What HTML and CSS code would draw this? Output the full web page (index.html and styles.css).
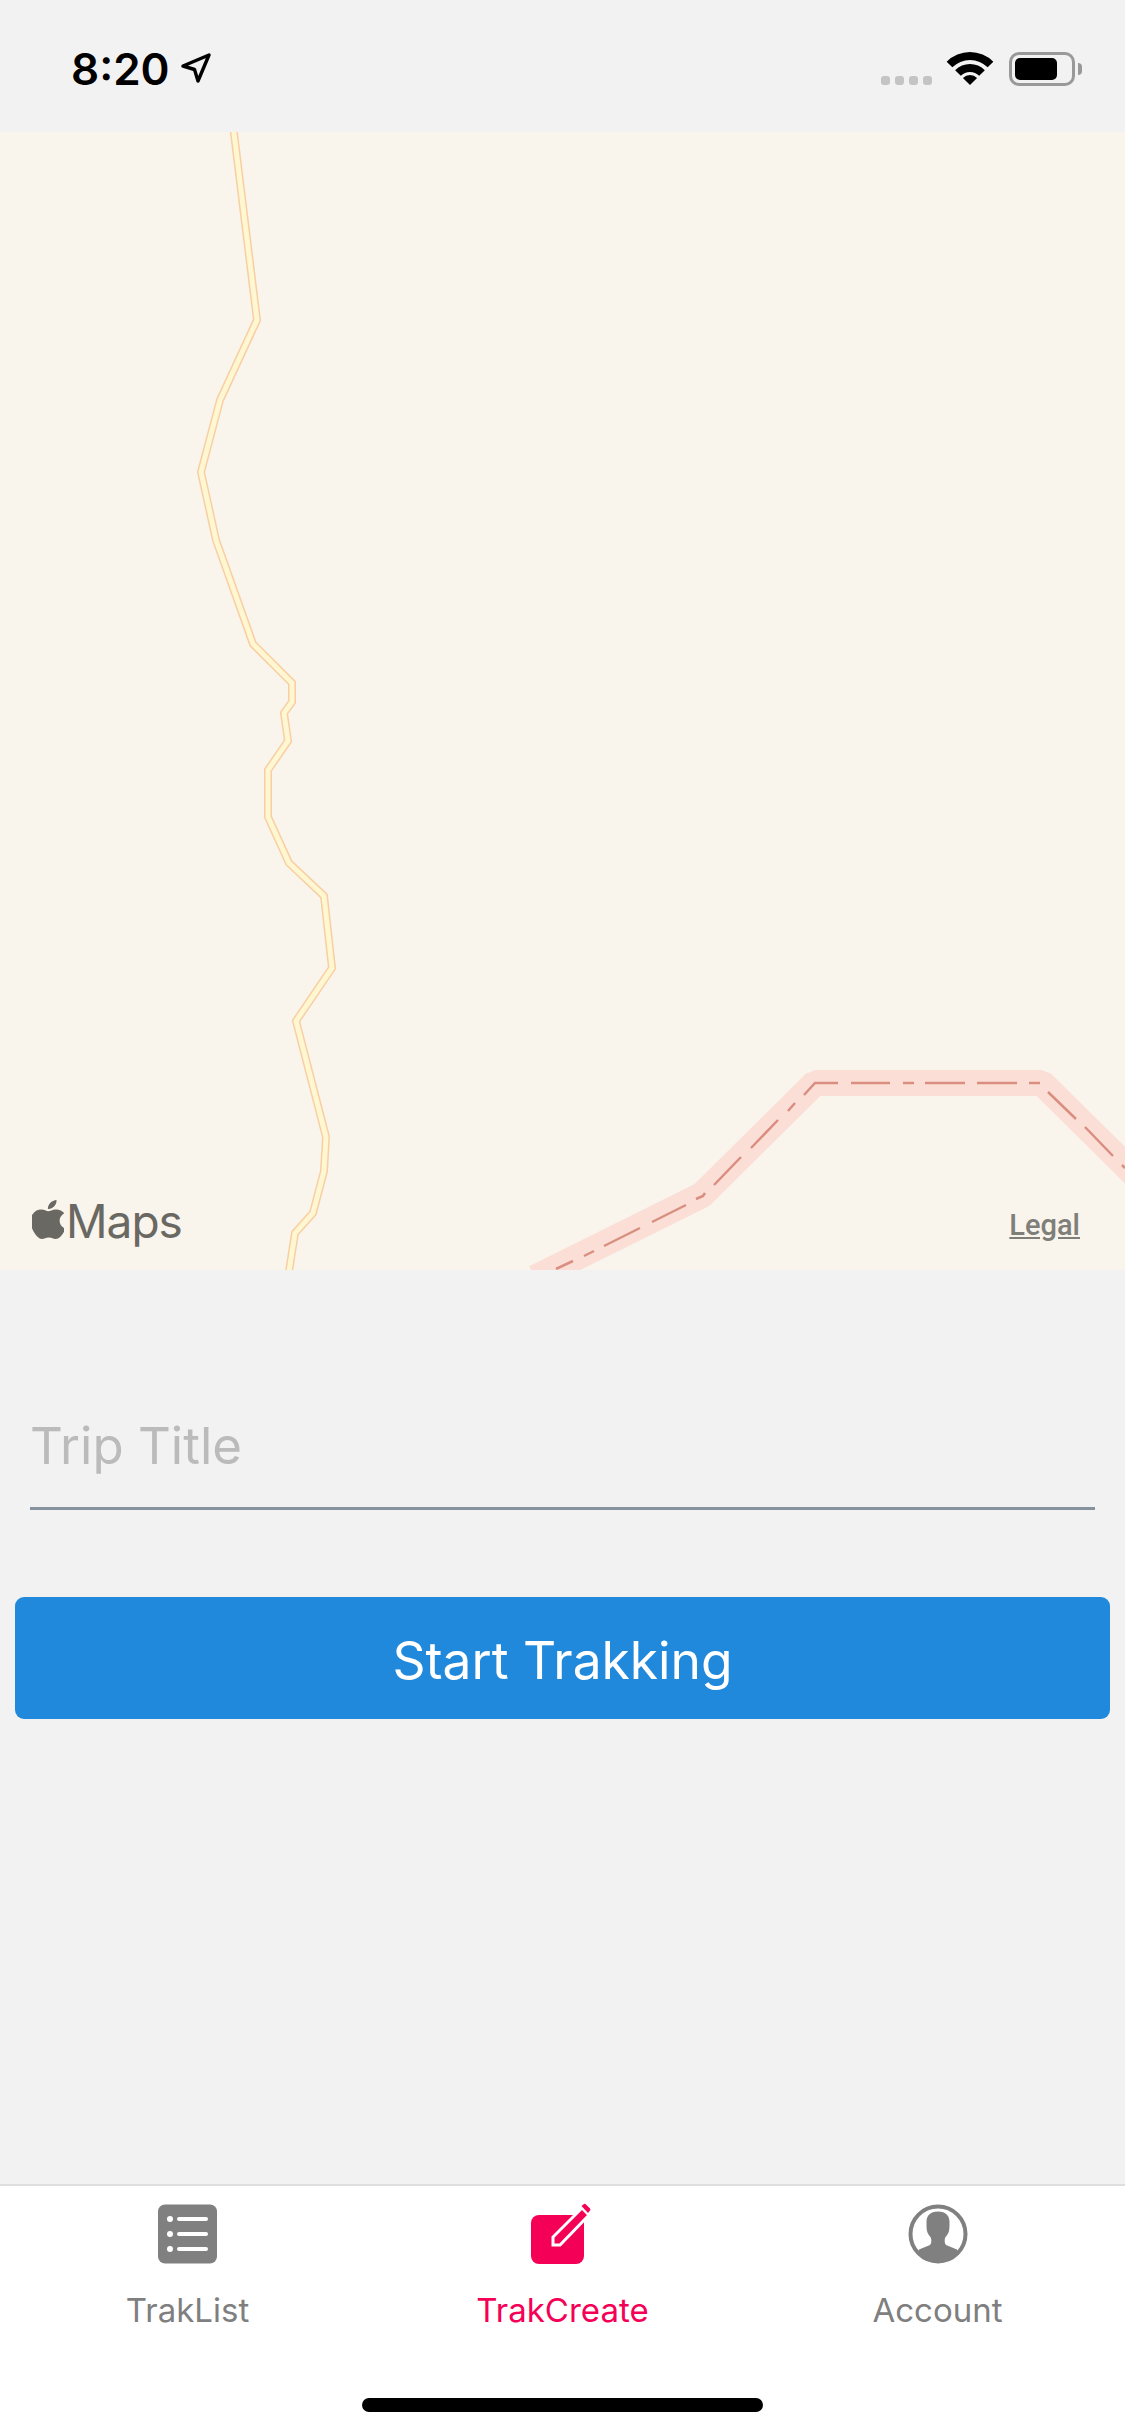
FILE: index.html
```html
<!DOCTYPE html>
<html lang="en">
<head>
    <meta charset="UTF-8">
    <title>TrakCreate</title>
    <link rel="stylesheet" href="styles.css">
</head>
<body>
    <div class="screen">
        <div class="status-bar">
            <div class="status-left">
                <span class="time">8:20</span>
                <svg class="location" width="30" height="30" viewBox="0 0 30 30">
                    <path d="M2 13 L28 2 L17 28 L13.5 16.5 Z" fill="none" stroke="#000" stroke-width="3.4" stroke-linejoin="round"/>
                </svg>
            </div>
            <div class="status-right">
                <div class="signal">
                    <span class="dot"></span>
                    <span class="dot"></span>
                    <span class="dot"></span>
                    <span class="dot"></span>
                </div>
                <svg class="wifi" width="46" height="34" viewBox="0 0 46 34">
                    <path d="M-.33 9.67 A33 33 0 0 1 46.33 9.67 L40.68 15.32 A25 25 0 0 0 5.32 15.32 Z"/>
                    <path d="M8.15 18.15 A21 21 0 0 1 37.85 18.15 L32.19 23.81 A13 13 0 0 0 13.81 23.81 Z"/>
                    <path d="M15.93 25.93 A10 10 0 0 1 30.07 25.93 L23 33 Z"/>
                </svg>
                <div class="battery">
                    <div class="battery-body"><div class="battery-level"></div></div>
                    <div class="battery-nub"></div>
                </div>
            </div>
        </div>

        <div class="map">
            <svg class="map-roads" width="1125" height="1138" viewBox="0 132 1125 1138">
                <path class="road-band" d="M535 1278 L702 1195 L815 1083 L1042 1083 L1140 1180"/>
                <path class="road-dash" d="M556 1269 L573 1261 M584 1256 L594 1251 M604 1246 L640 1228 M652 1222 L686 1205 M696 1199 L703 1196 L705 1193 M714 1185 L741 1157 M751 1148 L778 1120 M788 1111 L795 1103 M804 1095 L815 1083 L838 1083 M851 1083 L890 1083 M903 1083 L914 1083 M925 1083 L965 1083 M977 1083 L1017 1083 M1029 1083 L1040 1083 M1048 1092 L1076 1119 M1085 1127 L1113 1156 M1122 1165 L1125 1168"/>
                <path class="road-edge" d="M233 125 L257 320 L220 400 L201 472 L216 540 L253 644 L292 683 L292 702 L284 713 L288 741 L268 770 L268 817 L289 863 L324 896 L332 968 L296 1021 L326 1137 L324 1171 L313 1213 L295 1233 L288 1278"/>
                <path class="road-fill" d="M233 125 L257 320 L220 400 L201 472 L216 540 L253 644 L292 683 L292 702 L284 713 L288 741 L268 770 L268 817 L289 863 L324 896 L332 968 L296 1021 L326 1137 L324 1171 L313 1213 L295 1233 L288 1278"/>
            </svg>
            <div class="maps-logo">
                <svg class="apple" width="32" height="39" viewBox="3 0 18 24" preserveAspectRatio="none">
                    <path d="M12.152 6.896c-.948 0-2.415-1.078-3.96-1.04-2.04.027-3.91 1.183-4.961 3.014-2.117 3.675-.546 9.103 1.519 12.09 1.013 1.454 2.208 3.09 3.792 3.039 1.52-.065 2.09-.987 3.935-.987 1.831 0 2.35.987 3.96.948 1.637-.026 2.676-1.48 3.676-2.948 1.156-1.688 1.636-3.325 1.662-3.415-.039-.013-3.182-1.221-3.22-4.857-.026-3.04 2.48-4.494 2.597-4.559-1.429-2.09-3.623-2.324-4.39-2.376-2-.156-3.675 1.09-4.61 1.09zM15.53 3.83c.843-1.012 1.4-2.427 1.245-3.83-1.207.052-2.662.805-3.532 1.818-.78.896-1.454 2.338-1.273 3.714 1.338.104 2.715-.688 3.559-1.701"/>
                </svg>
                <span class="maps-text">Maps</span>
            </div>
            <span class="legal">Legal</span>
        </div>

        <div class="form">
            <div class="title-field">
                <span class="placeholder">Trip Title</span>
            </div>
            <button class="start-button" type="button">Start Trakking</button>
        </div>

        <div class="tab-bar">
            <div class="tabs">
                <div class="tab">
                    <svg class="tab-icon" width="60" height="60" viewBox="0 0 60 60">
                        <rect x="0" y="0.5" width="59" height="59" rx="7" fill="#808080"/>
                        <g fill="#fff">
                            <circle cx="12" cy="15" r="3"/>
                            <circle cx="12" cy="30" r="3"/>
                            <circle cx="12" cy="45" r="3"/>
                        </g>
                        <g stroke="#fff" stroke-width="4" stroke-linecap="round">
                            <path d="M21 15 H48"/>
                            <path d="M21 30 H48"/>
                            <path d="M21 45 H48"/>
                        </g>
                    </svg>
                    <span class="tab-label">TrakList</span>
                </div>
                <div class="tab tab-active">
                    <svg class="tab-icon" width="60" height="60" viewBox="2 0 60 60">
                        <rect x="0" y="11" width="53" height="49" rx="8" fill="#f50057"/>
                        <path d="M22 41 L22 33 L51 4 L58 11 L29 41 Z" fill="#f50057" stroke="#fff" stroke-width="3" stroke-linejoin="miter"/>
                        <path d="M50.5 2 L53 0 Q54 -.5 55 .5 L59 4.5 Q60 5.5 59 6.5 L57 9 Z" fill="#f50057"/>
                    </svg>
                    <span class="tab-label">TrakCreate</span>
                </div>
                <div class="tab">
                    <svg class="tab-icon" width="60" height="60" viewBox="0 0 60 60">
                        <defs>
                            <clipPath id="account-clip"><circle cx="30" cy="30" r="27.5"/></clipPath>
                        </defs>
                        <circle cx="30" cy="30" r="27.5" fill="#fff" stroke="#808080" stroke-width="4"/>
                        <path clip-path="url(#account-clip)" d="M30 7.5 C38 7.5 41.5 12 41.5 18 C41.5 22 41.5 25 41 27 C40.5 30 38 32 37 34 C36.5 37 36.5 39 38 41 L49 45.5 L52 62 L8 62 L11 45.5 L22 41 C23.5 39 23.5 37 23 34 C22 32 19.5 30 19 27 C18.5 25 18.5 22 18.5 18 C18.5 12 22 7.5 30 7.5 Z" fill="#808080"/>
                    </svg>
                    <span class="tab-label">Account</span>
                </div>
            </div>
            <div class="home-indicator"></div>
        </div>
    </div>
</body>
</html>
```

FILE: styles.css
```css
* {
    box-sizing: border-box;
}
body {
    margin: 0;
    font-family: Inter, "Liberation Sans", sans-serif;
    background-color: #f2f2f2;
}
.screen {
    width: 1125px;
    height: 2436px;
    display: flex;
    flex-direction: column;
    overflow: hidden;
}

/* status bar */
.status-bar {
    height: 132px;
    flex-shrink: 0;
    display: flex;
    justify-content: space-between;
    padding: 52px 43px 0 71px;
    background-color: #f2f2f2;
}
.status-left {
    display: flex;
    align-items: flex-start;
}
.time {
    font-size: 44px;
    font-weight: 600;
    line-height: 34px;
    color: #000;
}
.location {
    margin: 1px 0 0 11px;
}
.status-right {
    display: flex;
    align-items: flex-start;
}
.signal {
    display: flex;
    gap: 5px;
    margin: 24px 15px 0 0;
}
.dot {
    width: 9px;
    height: 9px;
    border-radius: 3px;
    background-color: #c4c4c4;
}
.wifi {
    overflow: visible;
    margin-right: 16px;
}
.battery {
    display: flex;
    align-items: center;
}
.battery-body {
    width: 66px;
    height: 34px;
    padding: 3px;
    border: 3px solid #999;
    border-radius: 10px;
}
.battery-level {
    width: 42px;
    height: 22px;
    border-radius: 5px;
    background-color: #000;
}
.battery-nub {
    width: 4px;
    height: 12px;
    margin-left: 3px;
    border-radius: 0 4px 4px 0;
    background-color: #999;
}

/* map */
.map {
    position: relative;
    height: 1138px;
    flex-shrink: 0;
    background-color: #f9f4ec;
    overflow: hidden;
}
.map-roads {
    display: block;
}
.map-roads path {
    fill: none;
}
.road-band {
    stroke: #fbdfd6;
    stroke-width: 26;
    stroke-linejoin: bevel;
}
.road-dash {
    stroke: #d98e80;
    stroke-width: 2.5;
}
.road-edge {
    stroke: #f8cfa2;
    stroke-width: 8;
}
.road-fill {
    stroke: #fff6d2;
    stroke-width: 5;
}
.maps-logo {
    position: absolute;
    left: 32px;
    top: 1068px;
    display: flex;
    align-items: flex-start;
    color: #696862;
}
.apple {
    fill: #696862;
    flex-shrink: 0;
}
.maps-text {
    font-size: 46px;
    line-height: 46px;
    margin: -2px 0 0 2px;
    letter-spacing: -1px;
}
.legal {
    position: absolute;
    right: 45px;
    top: 1077px;
    font-family: Roboto, sans-serif;
    font-size: 29px;
    font-weight: 500;
    line-height: 32px;
    color: #7f7f79;
    text-decoration: underline;
}

/* form */
.form {
    flex: 1;
    padding: 0 15px;
    background-color: #f2f2f2;
}
.title-field {
    height: 240px;
    margin: 0 15px;
    padding: 146px 0 0;
    border-bottom: 3px solid #86939e;
}
.placeholder {
    display: block;
    font-size: 51px;
    line-height: 60px;
    color: #bbb;
}
.start-button {
    display: block;
    width: 100%;
    height: 122px;
    margin-top: 87px;
    padding: 3px 0 0;
    border: none;
    border-radius: 9px;
    background-color: #2089dc;
    color: #fff;
    font-family: inherit;
    font-size: 51.5px;
}

/* tab bar */
.tab-bar {
    height: 252px;
    flex-shrink: 0;
    display: flex;
    flex-direction: column;
    align-items: center;
    border-top: 2px solid #dedede;
    background-color: #fff;
}
.tabs {
    width: 100%;
    display: flex;
    padding-top: 18px;
}
.tab {
    flex: 1;
    display: flex;
    flex-direction: column;
    align-items: center;
}
.tab-icon {
    display: block;
    overflow: visible;
}
.tab-label {
    margin-top: 26px;
    font-size: 33px;
    line-height: 40px;
    color: #7f7f7f;
}
.tab-active .tab-label {
    color: #f50057;
}
.home-indicator {
    width: 401px;
    height: 14px;
    margin-top: 68px;
    border-radius: 7px;
    background-color: #000;
}
```
